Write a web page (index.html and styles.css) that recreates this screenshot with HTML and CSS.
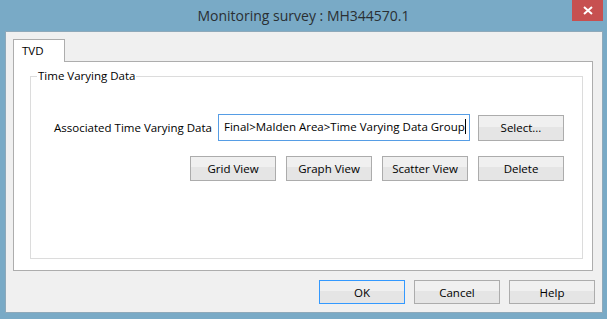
FILE: index.html
```html
<!DOCTYPE html>
<html lang="en">
<head>
    <meta charset="UTF-8">
    <title>Monitoring survey : MH344570.1</title>
    <link rel="stylesheet" href="styles.css">
</head>
<body>
    <div class="window">
        <div class="titlebar">
            <span class="title">Monitoring survey : MH344570.1</span>
            <button type="button" class="close-btn" aria-label="Close">
                <svg width="10" height="9" viewBox="0 0 10 9">
                    <path d="M1 1 L9 8 M9 1 L1 8" stroke="#fff" stroke-width="2" fill="none"/>
                </svg>
            </button>
        </div>
        <div class="client">
            <div class="tabs">
                <div class="tab">TVD</div>
            </div>
            <div class="tab-panel">
                <fieldset class="group">
                    <legend>Time Varying Data</legend>
                    <div class="row">
                        <label for="tvdPath">Associated Time Varying Data</label>
                        <div class="path-box" id="tvdPath">Final&gt;Malden Area&gt;Time Varying Data Group<span class="caret"></span></div>
                        <button type="button" class="btn select-btn">Select...</button>
                    </div>
                    <div class="row view-row">
                        <button type="button" class="btn">Grid View</button>
                        <button type="button" class="btn">Graph View</button>
                        <button type="button" class="btn">Scatter View</button>
                        <button type="button" class="btn">Delete</button>
                    </div>
                </fieldset>
            </div>
            <div class="footer">
                <button type="button" class="btn btn-default">OK</button>
                <button type="button" class="btn">Cancel</button>
                <button type="button" class="btn">Help</button>
            </div>
        </div>
    </div>
</body>
</html>
```

FILE: styles.css
```css
* {
    box-sizing: border-box;
}
body {
    margin: 0;
    padding: 0;
    background-color: #79aac6;
    font-family: "Open Sans", "Noto Sans", Arial, sans-serif;
    font-size: 11.5px;
    color: #000;
}
.window {
    width: 607px;
    height: 319px;
    display: flex;
    flex-direction: column;
}
.titlebar {
    position: relative;
    height: 31px;
    display: flex;
    justify-content: center;
    align-items: center;
    padding-bottom: 1px;
}
.title {
    font-size: 14px;
    color: #2a2f33;
}
.close-btn {
    position: absolute;
    top: 0;
    right: 4px;
    width: 31px;
    height: 21px;
    border: none;
    padding: 0;
    background-color: #c75050;
    display: flex;
    justify-content: center;
    align-items: center;
}
.client {
    margin: 0 4px 6px 5px;
    flex: 1;
    background-color: #f0f0f0;
    border: 1px solid #8ea9ba;
    padding: 7px 9px 8px 7px;
    display: flex;
    flex-direction: column;
}
.tabs {
    display: flex;
}
.tab {
    position: relative;
    z-index: 1;
    width: 52px;
    height: 23px;
    margin-bottom: -1px;
    padding: 3px 0 0 8px;
    background-color: #fff;
    border: 1px solid #adadad;
    border-bottom: none;
}
.tab-panel {
    flex: 1;
    background-color: #fff;
    border: 1px solid #adadad;
    padding: 6px 9px 11px 16px;
    display: flex;
}
.group {
    flex: 1;
    margin: 0;
    padding: 30px 18px 0 0;
    border: 1px solid #dcdcdc;
    min-width: 0;
}
.group legend {
    margin-left: 6px;
    padding: 0 1px;
    line-height: 16px;
}
.row {
    display: flex;
    justify-content: flex-end;
    align-items: center;
}
.row label {
    margin-right: 6px;
}
.path-box {
    width: 252px;
    height: 27px;
    margin-right: 8px;
    padding: 0 0 2px 5px;
    border: 1px solid #569de5;
    background-color: #fff;
    display: flex;
    align-items: center;
    white-space: nowrap;
}
.caret {
    display: inline-block;
    width: 1px;
    height: 15px;
    background-color: #000;
}
.view-row {
    margin-top: 15px;
    gap: 10px;
}
.btn {
    width: 86px;
    height: 25px;
    padding: 0;
    font-family: inherit;
    font-size: 11.5px;
    color: #000;
    border: 1px solid #acacac;
    background: linear-gradient(#f0f0f0 45%, #e5e5e5 45%);
}
.select-btn {
    height: 26px;
}
.footer {
    margin-top: 9px;
    margin-right: -2px;
    display: flex;
    justify-content: flex-end;
    gap: 9px;
}
.footer .btn {
    height: 24px;
}
.btn-default {
    border-color: #3399ff;
}
```
